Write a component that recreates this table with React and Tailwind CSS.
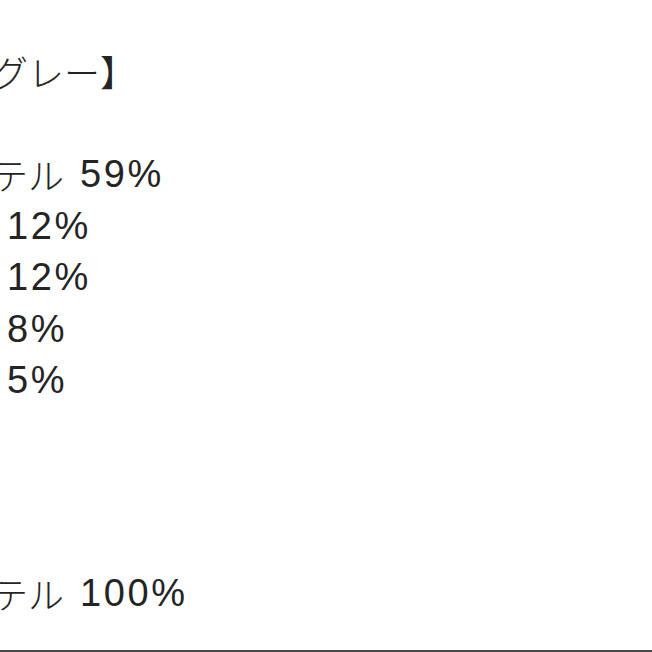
export default function App() {
  const jp = 'font-["Noto_Sans_CJK_JP",sans-serif] text-[36px] font-light leading-[51.5px]';
  const num = 'font-["Liberation_Sans",Arial,sans-serif] text-[38px] tracking-[2.6px] leading-[51.5px]';
  const line = "h-[51.5px] leading-[51.5px] flex items-center";
  return (
    <div className="w-[652px] h-[652px] bg-white overflow-hidden flex flex-col relative">
      <div className="flex-1 flex flex-col text-[#242424] pt-[46px] ml-[-8px] whitespace-pre">
        <div className={line}><span className={jp}>グレー】</span></div>
        <div className={line} />
        <div className={line}>
          <span className={jp}>テル</span>
          <span className={num + " pl-[16px]"}>59%</span>
        </div>
        <div className={line + " pl-[15px]"}><span className={num}>12%</span></div>
        <div className={line + " pl-[15px]"}><span className={num}>12%</span></div>
        <div className={line + " pl-[15px]"}><span className={num}>8%</span></div>
        <div className={line + " pl-[15px]"}><span className={num}>5%</span></div>
        <div className={line} />
        <div className={line} />
        <div className={line} />
        <div className={line + " mt-[7px]"}>
          <span className={jp}>テル</span>
          <span className={num + " pl-[16px]"}>100%</span>
        </div>
      </div>
      <div className="h-[2px] bg-[#4a4a4a]" />
    </div>
  );
}
